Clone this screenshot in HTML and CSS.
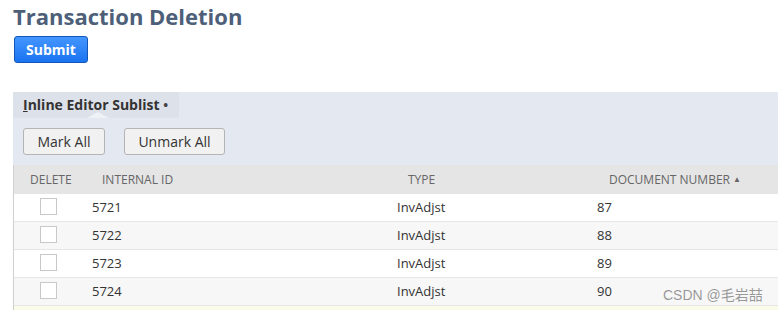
FILE: index.html
```html
<!DOCTYPE html>
<html lang="en">
<head>
    <meta charset="UTF-8">
    <meta name="viewport" content="width=device-width, initial-scale=1.0">
    <title>Transaction Deletion</title>
    <link rel="stylesheet" href="styles.css">
</head>
<body>
    <div class="page">
        <h1 class="title">Transaction Deletion</h1>
        <button class="submit">Submit</button>

        <div class="sublist">
            <div class="tabs">
                <div class="tab"><span class="key">I</span>nline Editor Sublist <span class="dot">&bull;</span></div>
            </div>
            <div class="toolbar">
                <button class="btn">Mark All</button>
                <button class="btn">Unmark All</button>
            </div>
            <div class="grid">
                <div class="row head">
                    <div class="c1">Delete</div>
                    <div class="c2">Internal ID</div>
                    <div class="c3">Type</div>
                    <div class="c4">Document Number <span class="sort">&#9650;</span></div>
                </div>
                <div class="row">
                    <div class="c1"><span class="box"></span></div>
                    <div class="c2">5721</div>
                    <div class="c3">InvAdjst</div>
                    <div class="c4">87</div>
                </div>
                <div class="row alt">
                    <div class="c1"><span class="box"></span></div>
                    <div class="c2">5722</div>
                    <div class="c3">InvAdjst</div>
                    <div class="c4">88</div>
                </div>
                <div class="row">
                    <div class="c1"><span class="box"></span></div>
                    <div class="c2">5723</div>
                    <div class="c3">InvAdjst</div>
                    <div class="c4">89</div>
                </div>
                <div class="row alt">
                    <div class="c1"><span class="box"></span></div>
                    <div class="c2">5724</div>
                    <div class="c3">InvAdjst</div>
                    <div class="c4">90</div>
                </div>
                <div class="row new">
                    <div class="c1"><span class="box"></span></div>
                    <div class="c2"></div>
                    <div class="c3"></div>
                    <div class="c4"></div>
                </div>
            </div>
        </div>
    </div>
    <div class="watermark">CSDN @毛岩喆</div>
</body>
</html>
```

FILE: styles.css
```css
html, body { margin: 0; height: 310px; overflow: hidden; }
body { font-family: "Open Sans", Arial, sans-serif; color: #333; background: #fff; position: relative; }
.page { padding-left: 13px; height: 310px; overflow: hidden; }
.title { margin: 0; font-size: 22px; line-height: 32px; font-weight: 700; color: #4d5f79; }
.submit { margin: 4px 0 0 1px; height: 27px; width: 74px; padding: 0; font-family: inherit; font-size: 14px; font-weight: 700; color: #fff; background: linear-gradient(#4496ff, #1a73f0); border: 1px solid #1456b8; border-radius: 3px; }

.sublist { margin-top: 29px; background: #e4e8f0; }
.tabs { height: 26px; display: flex; }
.tab { position: relative; background: #dde1e9; padding: 0 11px 0 10px; font-size: 14px; font-weight: 700; line-height: 26px; color: #333; }
.tab .key { text-decoration: underline; }
.tab .dot { font-size: 13px; color: #444; }
.tab::after { content: ""; position: absolute; left: 74px; bottom: 0; border: 6px solid transparent; border-bottom-color: #eef1f6; border-left-width: 11px; border-right-width: 11px; border-top-width: 0; }

.toolbar { display: flex; gap: 19px; padding: 10px 0 10px 10px; }
.btn { height: 27px; padding: 0 12px; font-family: inherit; font-size: 14px; color: #333; background: #f1f1f1; border: 1px solid #b4b4b4; border-radius: 3px; }
.btn:first-child { width: 82px; }
.btn:last-child { width: 101px; }

.grid { border-left: 1px solid #cfcfcf; background: #fff; }
.row { display: grid; grid-template-columns: 74px 300px 202px 1fr; height: 28px; padding-bottom: 2px; align-items: center; font-size: 13px; border-bottom: 1px solid #e6e6e6; box-sizing: border-box; }
.row.alt { background: #f7f7f7; }
.row.new { background: #fbfbea; }
.row.head { height: 29px; padding-bottom: 0; background: #e5e5e5; border-bottom: none; font-size: 12px; text-transform: uppercase; color: #666; }
.head .c1 { padding-left: 16px; }
.head .c2 { padding-left: 14px; }
.head .c3 { padding-left: 20px; }
.head .c4 { padding-left: 19px; }
.sort { font-size: 8px; vertical-align: 2px; }
.c1 { padding-left: 26px; }
.c2 { padding-left: 4px; }
.c3 { padding-left: 9px; }
.c4 { padding-left: 7px; }
.box { display: block; width: 15px; height: 15px; border: 1px solid #c8c8c8; background: #fff; }

.watermark { position: absolute; left: 663px; top: 284px; font-size: 14px; color: rgba(120, 120, 120, 0.75); font-family: "Liberation Sans", "Noto Sans CJK SC", sans-serif; }
```
